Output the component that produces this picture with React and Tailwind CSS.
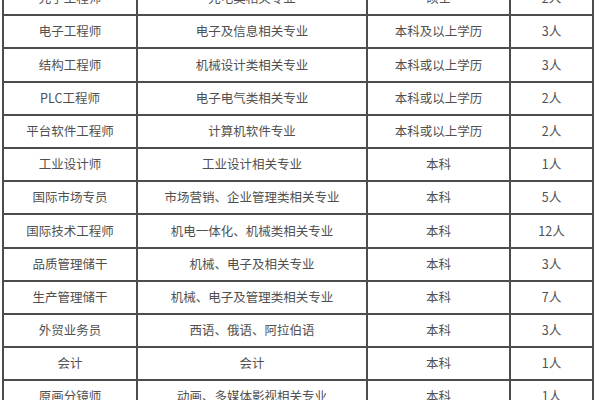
const rows = [
  ['光学工程师', '光电类相关专业', '硕士', '2人'],
  ['电子工程师', '电子及信息相关专业', '本科及以上学历', '3人'],
  ['结构工程师', '机械设计类相关专业', '本科或以上学历', '3人'],
  ['PLC工程师', '电子电气类相关专业', '本科或以上学历', '2人'],
  ['平台软件工程师', '计算机软件专业', '本科或以上学历', '2人'],
  ['工业设计师', '工业设计相关专业', '本科', '1人'],
  ['国际市场专员', '市场营销、企业管理类相关专业', '本科', '5人'],
  ['国际技术工程师', '机电一体化、机械类相关专业', '本科', '12人'],
  ['品质管理储干', '机械、电子及相关专业', '本科', '3人'],
  ['生产管理储干', '机械、电子及管理类相关专业', '本科', '7人'],
  ['外贸业务员', '西语、俄语、阿拉伯语', '本科', '3人'],
  ['会计', '会计', '本科', '1人'],
  ['原画分镜师', '动画、多媒体影视相关专业', '本科', '1人'],
];

export default function App() {
  return (
    <div
      className="h-[400px] w-[600px] overflow-hidden bg-white"
      style={{ fontFamily: '"Noto Sans CJK SC", "Noto Sans", sans-serif' }}
    >
      <div className="-mt-[19px] ml-[2px] w-[592px]">
        {rows.map((r, i) => (
          <div key={i} className="flex h-[33.2px] border-t-2 border-[#4d4d4d] text-[12.5px] text-[#505050]">
            <div className="flex w-[134px] items-center justify-center border-l-2 border-[#4d4d4d]">{r[0]}</div>
            <div className="flex w-[230px] items-center justify-center border-l-2 border-[#4d4d4d]">{r[1]}</div>
            <div className="flex w-[143px] items-center justify-center border-l-2 border-[#4d4d4d]">{r[2]}</div>
            <div className="flex w-[85px] items-center justify-center border-x-2 border-[#4d4d4d]">{r[3]}</div>
          </div>
        ))}
      </div>
    </div>
  );
}
